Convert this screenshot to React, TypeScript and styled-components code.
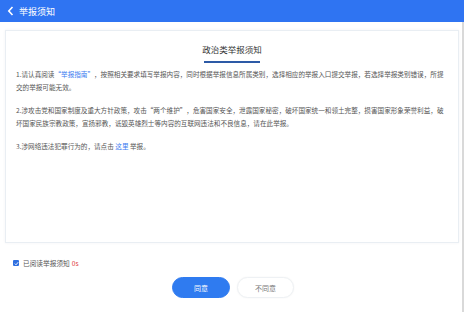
import React from 'react';
import styled, { createGlobalStyle } from 'styled-components';

const GlobalStyle = createGlobalStyle`
  html, body {
    margin: 0;
    padding: 0;
    background: #fff;
  }
  body {
    font-family: 'Noto Sans CJK SC', 'Noto Sans', sans-serif;
    color: #333;
    text-spacing-trim: space-all;
  }
`;

const Page = styled.div`
  width: 464px;
  height: 312px;
  overflow: hidden;
  box-shadow: inset -2px 0 0 #d9d9d9;
`;

const Header = styled.div`
  height: 22px;
  background: #2f74f2;
  display: flex;
  align-items: center;
  padding-left: 7px;
  gap: 5px;
  color: #fff;
  font-size: 9px;
`;

const Card = styled.div`
  margin: 8px 5px 0;
  height: 213px;
  box-sizing: border-box;
  padding: 12px 10px 0;
  border: 1px solid #e9eef3;
  box-shadow: 0 0 3px rgba(0, 40, 80, 0.05);
`;

const Title = styled.h2`
  margin: 0;
  font-size: 8.5px;
  line-height: 13px;
  font-weight: 400;
  text-align: center;
  color: #333;
`;

const TitleLine = styled.div`
  width: 56px;
  height: 2px;
  margin: 5px auto 5px;
  background: #2d5aa6;
`;

const Paragraph = styled.p`
  margin: 0 0 10px;
  font-size: 6.6px;
  line-height: 13px;
  color: #555;
  word-break: break-all;
  text-spacing-trim: space-all;
`;

const Link = styled.span`
  color: #3a7bf0;
`;

const CheckRow = styled.label`
  display: flex;
  align-items: center;
  gap: 4px;
  margin: 15px 0 0 13px;
  font-size: 6.7px;
  color: #555;
`;

const Box = styled.span`
  width: 6px;
  height: 6px;
  border-radius: 1px;
  background: #2f6fe0;
  display: flex;
  align-items: center;
  justify-content: center;
`;

const Countdown = styled.span`
  color: #e0393e;
  margin-left: 2px;
`;

const Buttons = styled.div`
  display: flex;
  justify-content: center;
  gap: 7px;
  margin-top: 9px;
  padding-left: 2px;
`;

const Button = styled.button<{ $primary?: boolean }>`
  width: ${(p) => (p.$primary ? '58px' : '57px')};
  height: 21px;
  border-radius: 11px;
  font-family: inherit;
  font-size: 7px;
  cursor: pointer;
  border: 1px solid ${(p) => (p.$primary ? '#2f7bf0' : '#eef1f4')};
  background: ${(p) => (p.$primary ? '#2f7bf0' : '#fff')};
  color: ${(p) => (p.$primary ? '#fff' : '#777')};
  box-shadow: ${(p) => (p.$primary ? 'none' : '0 0 2px rgba(0,0,0,0.05)')};
`;

const App = () => {
  return (
    <Page>
      <GlobalStyle />
      <Header>
        <svg width="7" height="10" viewBox="0 0 7 10">
          <path d="M5.5 1 L1.8 5 L5.5 9" stroke="#fff" strokeWidth="1.6" fill="none" />
        </svg>
        <span>举报须知</span>
      </Header>
      <Card>
        <Title>政治类举报须知</Title>
        <TitleLine />
        <Paragraph>
          1.请认真阅读<Link>“举报指南”</Link>，按照相关要求填写举报内容，同时根据举报信息所属类别，选择相应的举报入口提交举报，若选择举报类别错误，所提交的举报可能无效。
        </Paragraph>
        <Paragraph>
          2.涉攻击党和国家制度及重大方针政策，攻击“两个维护”，危害国家安全，泄露国家秘密，破坏国家统一和领土完整，损害国家形象荣誉利益，破坏国家民族宗教政策，宣扬邪教，诋毁英雄烈士等内容的互联网违法和不良信息，请在此举报。
        </Paragraph>
        <Paragraph>
          3.涉网络违法犯罪行为的，请点击 <Link>这里</Link> 举报。
        </Paragraph>
      </Card>
      <CheckRow>
        <Box>
          <svg width="5" height="5" viewBox="0 0 5 5">
            <path d="M0.8 2.6 L2 3.8 L4.2 1.2" stroke="#fff" strokeWidth="0.9" fill="none" />
          </svg>
        </Box>
        <span>
          已阅读举报须知<Countdown>0s</Countdown>
        </span>
      </CheckRow>
      <Buttons>
        <Button $primary>同意</Button>
        <Button>不同意</Button>
      </Buttons>
    </Page>
  );
};

export default App;
